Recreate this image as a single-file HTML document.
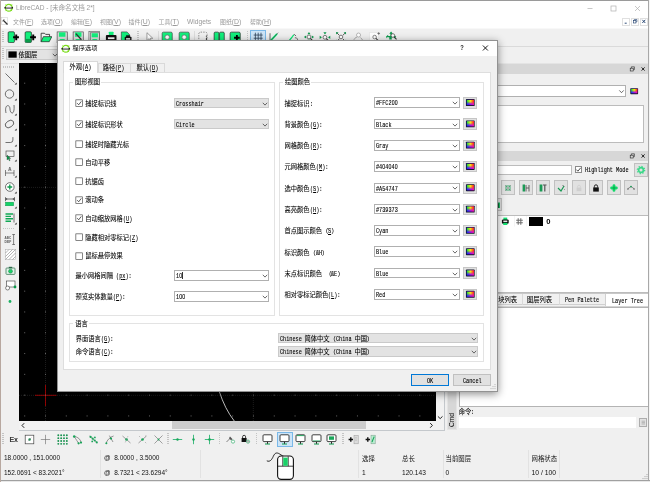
<!DOCTYPE html>
<html><head><meta charset="utf-8"><title>LibreCAD</title><style>
html,body{margin:0;padding:0}
body{width:650px;height:482px;overflow:hidden;position:relative;background:#f0f0f0;font-family:"Liberation Sans","Noto Sans CJK SC",sans-serif;font-size:6px;color:#000}
div,svg{position:absolute;box-sizing:border-box}
.t{white-space:nowrap}
.s{font-family:"Liberation Mono","Noto Sans CJK SC",monospace;-webkit-text-stroke:0.13px #000}
.m{display:inline-block;line-height:0;font-family:"Liberation Mono",monospace;font-size:7px;transform:scaleX(.74);transform-origin:0 50%;-webkit-text-stroke:0.12px #000}
.c{font-family:"Liberation Mono","Noto Sans CJK SC",sans-serif;-webkit-text-stroke:0.07px #000}
.cb{background:#e3e3e3;border:1px solid #cacaca}
.ce{background:#fff;border:1px solid #b0b0b0}
.btn{background:#e1e1e1;border:1px solid #c0c0c0}
.chk{background:#fff;border:1px solid #8a8a8a}
.z{display:inline-block;position:static;width:0.6em;text-align:center;font-family:"Liberation Sans",sans-serif;line-height:0}
.grp{border:1px solid #e3e3e3}
.sep{background:#c8c8c8}
</style></head><body>
<div id="w" style="left:0;top:0;width:650px;height:482px;will-change:transform">
<div style="left:0px;top:0px;width:650px;height:28px;background:#fff"></div>
<div style="left:0px;top:0px;width:650px;height:1px;background:#9a9a9a"></div>
<div style="left:0px;top:28px;width:650px;height:1px;background:#f8f8f8"></div>
<svg style="left:4px;top:3px" width="9.5" height="9.5" viewBox="0 0 20 20"><circle cx="10" cy="10" r="7.2" fill="none" stroke="#7ddc1f" stroke-width="2.6"/><path d="M3 3l3 3M17 3l-3 3M3 17l3-3M17 17l-3-3" stroke="#7ddc1f" stroke-width="1.6"/><rect x="1" y="8.3" width="18" height="3.4" fill="#222"/><rect x="4" y="9.3" width="12" height="1.2" fill="#fff"/></svg>
<div class="t" style="left:16px;top:3.00px;font-size:6.55px;color:#9a9a9a;line-height:10px;">LibreCAD - [未命名文档 2*]</div>
<svg style="left:580px;top:0" width="70" height="17" viewBox="0 0 70 17"><path d="M7.5 8.5h5" stroke="#b0b0b0" stroke-width="0.7"/><rect x="31" y="6" width="5" height="5" fill="none" stroke="#b0b0b0" stroke-width="0.7"/><path d="M55 6l5 5M60 6l-5 5" stroke="#b0b0b0" stroke-width="0.7"/></svg>
<div style="left:622px;top:17.5px;width:7.5px;height:8px;background:#fff;border:0.5px solid #e0e0e0"></div>
<div style="left:631px;top:17.5px;width:7.5px;height:8px;background:#fff;border:0.5px solid #e0e0e0"></div>
<div style="left:640px;top:17.5px;width:7.5px;height:8px;background:#fff;border:0.5px solid #e0e0e0"></div>
<svg style="left:622px;top:17px" width="27" height="9" viewBox="0 0 27 9"><path d="M2.7 6.2h2" stroke="#1a3a6a" stroke-width="0.9"/><rect x="11.3" y="3.6" width="2.6" height="2.4" fill="none" stroke="#1a3a6a" stroke-width="0.6"/><path d="M12.3 3.4v-0.9h2.6v2.4h-0.9" fill="none" stroke="#1a3a6a" stroke-width="0.6"/><path d="M20.3 2.8l3 3.2M23.3 2.8l-3 3.2" stroke="#1a3a6a" stroke-width="0.9"/></svg>
<svg style="left:1px;top:17px" width="9" height="9" viewBox="0 0 9 9"><rect x="0.5" y="0.5" width="6" height="7" fill="#fff" stroke="#ccc" stroke-width="0.5"/><path d="M2 3l3 3 1.5 1.5" stroke="#333" stroke-width="1.2"/><path d="M1.5 4.5l2-2.5" stroke="#666" stroke-width="0.6"/></svg>
<div class="t" style="left:13px;top:17.10px;font-size:5.9px;color:#999;line-height:10px;">文件<span style="font-size:6.9px">(<u>F</u>)</span></div>
<div class="t" style="left:41px;top:17.10px;font-size:5.9px;color:#999;line-height:10px;">选项<span style="font-size:6.9px">(<u>O</u>)</span></div>
<div class="t" style="left:71px;top:17.10px;font-size:5.9px;color:#999;line-height:10px;">编辑<span style="font-size:6.9px">(<u>E</u>)</span></div>
<div class="t" style="left:100px;top:17.10px;font-size:5.9px;color:#999;line-height:10px;">视图<span style="font-size:6.9px">(<u>V</u>)</span></div>
<div class="t" style="left:128.6px;top:17.10px;font-size:5.9px;color:#999;line-height:10px;">插件<span style="font-size:6.9px">(<u>U</u>)</span></div>
<div class="t" style="left:158.5px;top:17.10px;font-size:5.9px;color:#999;line-height:10px;">工具<span style="font-size:6.9px">(<u>T</u>)</span></div>
<div class="t" style="left:187px;top:17.10px;font-size:5.9px;color:#999;line-height:10px;"><span style="font-size:6.7px">Widgets</span></div>
<div class="t" style="left:220px;top:17.10px;font-size:5.9px;color:#999;line-height:10px;">图纸<span style="font-size:6.9px">(<u>D</u>)</span></div>
<div class="t" style="left:250px;top:17.10px;font-size:5.9px;color:#999;line-height:10px;">帮助<span style="font-size:6.9px">(<u>H</u>)</span></div>
<div style="left:0px;top:45.5px;width:650px;height:0.7px;background:#dadada"></div>
<div style="left:0px;top:62.5px;width:650px;height:0.7px;background:#e4e4e4"></div>
<div style="left:2px;top:31px;width:1.5px;height:12px;background-image:repeating-linear-gradient(#c4c4c4 0 1px,transparent 1px 2px)"></div>
<svg style="left:6.8px;top:30.7px" width="12.4" height="12.4" viewBox="0 0 11 11"><rect x="1" y="0.7" width="5.6" height="9.6" rx="1" fill="#12f07c" stroke="#1c1c1c" stroke-width="0.6"/><path d="M5.4 5.6h5.2M8.2 3v5.2" stroke="#000" stroke-width="1.7"/></svg>
<svg style="left:23.8px;top:30.7px" width="12.4" height="12.4" viewBox="0 0 11 11"><rect x="1" y="0.7" width="5.6" height="9.6" rx="1" fill="#12f07c" stroke="#1c1c1c" stroke-width="0.6"/><rect x="1.3" y="7" width="5" height="3" fill="#0a9a4a"/><path d="M5.4 5.6h5.2M8.2 3v5.2" stroke="#000" stroke-width="1.7"/></svg>
<svg style="left:39.5px;top:30.7px" width="12.4" height="12.4" viewBox="0 0 11 11"><path d="M1 9.5V2h3l1 1h3.5v2" fill="none" stroke="#1c1c1c" stroke-width="0.7"/><path d="M1 9.5l2-4.5h7.5l-2.3 4.5z" fill="#12f07c" stroke="#1c1c1c" stroke-width="0.6"/></svg>
<svg style="left:56.3px;top:30.7px" width="12.4" height="12.4" viewBox="0 0 11 11"><rect x="1" y="0.8" width="9" height="9.6" fill="#dcdcdc" stroke="#4a4a4a" stroke-width="0.6"/><rect x="2.6" y="1.2" width="5.8" height="3.9" fill="#12f07c"/><rect x="3" y="7" width="5" height="3.2" rx="1.2" fill="#12f07c"/></svg>
<svg style="left:72.3px;top:30.7px" width="12.4" height="12.4" viewBox="0 0 11 11"><rect x="1" y="0.8" width="9" height="9.6" fill="#dcdcdc" stroke="#4a4a4a" stroke-width="0.6"/><rect x="2.6" y="1.2" width="5.8" height="3.9" fill="#12f07c"/><rect x="3" y="7" width="5" height="3.2" rx="1.2" fill="#12f07c"/><path d="M3.4 2.4l5 5.4" stroke="#333" stroke-width="1.1"/></svg>
<svg style="left:88.3px;top:30.7px" width="12.4" height="12.4" viewBox="0 0 11 11"><rect x="0.8" y="0.6" width="9.4" height="9.8" fill="#e4e4e4" stroke="#4a4a4a" stroke-width="0.5"/><rect x="2" y="1.6" width="8" height="8.6" fill="#dcdcdc" stroke="#4a4a4a" stroke-width="0.5"/><rect x="3.2" y="2" width="5.6" height="3.6" fill="#12f07c"/><rect x="3.6" y="7.2" width="4.8" height="3" rx="1.2" fill="#12f07c"/></svg>
<svg style="left:104.6px;top:30.7px" width="12.4" height="12.4" viewBox="0 0 11 11"><rect x="3.4" y="0.6" width="4.2" height="3.4" rx="0.6" fill="#12f07c"/><rect x="0.8" y="3.6" width="9.4" height="5.2" rx="0.9" fill="#111"/><rect x="2.6" y="5.6" width="5.8" height="1.6" fill="#fff"/><rect x="3" y="8" width="5" height="2.4" rx="0.6" fill="#12f07c"/></svg>
<svg style="left:120.3px;top:30.7px" width="12.4" height="12.4" viewBox="0 0 11 11"><path d="M1.2 0.8h5l2 2v7.6h-7z" fill="#12f07c" stroke="#2a2a2a" stroke-width="0.5"/><rect x="4.2" y="5" width="6" height="4" rx="0.7" fill="#111"/><rect x="5.4" y="3.8" width="3.6" height="1.6" fill="#111"/><rect x="5.4" y="6.4" width="3.6" height="1.2" fill="#fff"/></svg>
<div style="left:137.2px;top:31px;width:1.5px;height:12px;background-image:repeating-linear-gradient(#c4c4c4 0 1px,transparent 1px 2px)"></div>
<svg style="left:142.8px;top:30.7px" width="12.4" height="12.4" viewBox="0 0 11 11"><path d="M3.5 1.5v7l1.8-1.6 1.3 2.8 1-0.5-1.3-2.7h2.4z" fill="#fff" stroke="#777" stroke-width="0.6"/></svg>
<svg style="left:160.8px;top:30.7px" width="12.4" height="12.4" viewBox="0 0 11 11"><rect x="1" y="1" width="9" height="9.4" rx="1.2" fill="#12f07c" stroke="#444" stroke-width="0.6"/><circle cx="5.5" cy="5.5" r="2" fill="#fff" stroke="#666" stroke-width="0.6"/></svg>
<svg style="left:177.5px;top:30.7px" width="12.4" height="12.4" viewBox="0 0 11 11"><rect x="1" y="1" width="9" height="9.4" rx="1.2" fill="#12f07c" stroke="#444" stroke-width="0.6"/><circle cx="5.5" cy="5.5" r="2" fill="#fff" stroke="#666" stroke-width="0.6"/></svg>
<svg style="left:196.8px;top:30.7px" width="12.4" height="12.4" viewBox="0 0 11 11"><rect x="1.6" y="1" width="7.4" height="9.4" rx="1.6" fill="none" stroke="#777" stroke-width="0.7" stroke-dasharray="1.3 1"/><path d="M8.4 6v4" stroke="#444" stroke-width="1"/><circle cx="8.4" cy="4.6" r="0.6" fill="#444"/></svg>
<svg style="left:212.8px;top:30.7px" width="12.4" height="12.4" viewBox="0 0 11 11"><rect x="1" y="1" width="4.2" height="9" rx="1" fill="#12f07c" stroke="#222" stroke-width="0.6"/><rect x="5.8" y="1" width="4.2" height="9" rx="1" fill="#12f07c" stroke="#222" stroke-width="0.6"/></svg>
<svg style="left:228.6px;top:30.7px" width="12.4" height="12.4" viewBox="0 0 11 11"><rect x="1" y="1" width="9" height="9.4" rx="1.2" fill="#12f07c" stroke="#222" stroke-width="0.6"/><path d="M4.5 6h5M7 3.6v4.8" stroke="#000" stroke-width="1.6"/></svg>
<div style="left:246.6px;top:31px;width:1.5px;height:12px;background-image:repeating-linear-gradient(#c4c4c4 0 1px,transparent 1px 2px)"></div>
<div style="left:158px;top:31px;width:1px;height:13px;background:#dcdcdc"></div>
<div style="left:194px;top:31px;width:1px;height:13px;background:#dcdcdc"></div>
<div style="left:250px;top:29.5px;width:16px;height:15.5px;background:#cce4f7;border:0.6px solid #7ab8e8"></div>
<svg style="left:251.6px;top:30.7px" width="12.4" height="12.4" viewBox="0 0 11 11"><path d="M3 1.5v8M5.5 1.5v8M8 1.5v8M1.5 3.6h8M1.5 6.4h8" stroke="#2a3e55" stroke-width="0.7"/></svg>
<svg style="left:267.6px;top:30.7px" width="12.4" height="12.4" viewBox="0 0 11 11"><path d="M1.5 9.5l6.5-7" stroke="#12f07c" stroke-width="1.6"/><path d="M1.5 9.5l7.5-8" stroke="#333" stroke-width="0.5"/><path d="M1.8 2v6" stroke="#444" stroke-width="0.7"/></svg>
<svg style="left:286.8px;top:30.7px" width="12.4" height="12.4" viewBox="0 0 11 11"><path d="M1.5 9l5-6 1.5 1.5" fill="none" stroke="#555" stroke-width="0.8"/><path d="M2 8.5l4-5" stroke="#12f07c" stroke-width="1.1"/><path d="M6 9.3a2 2 0 1 0 1-3.3" fill="none" stroke="#555" stroke-width="0.7"/></svg>
<svg style="left:302.8px;top:30.7px" width="12.4" height="12.4" viewBox="0 0 11 11"><circle cx="5.3" cy="5.3" r="1.7" fill="#fff" stroke="#444" stroke-width="0.6"/><path d="M6.5 6.5l2 2" stroke="#333" stroke-width="0.9"/><path d="M0.8 5.3l2-1.4v2.8zM9.8 5.3l-2-1.4v2.8zM5.3 0.8l-1.4 2h2.8zM5.3 9.8l-1.4-2h2.8z" fill="#0c9a4c"/></svg>
<svg style="left:318.8px;top:30.7px" width="12.4" height="12.4" viewBox="0 0 11 11"><circle cx="5.3" cy="5.6" r="1.7" fill="#fff" stroke="#444" stroke-width="0.6"/><path d="M6.5 6.8l2 2" stroke="#333" stroke-width="0.9"/><path d="M2.6 5.6l-2-1.4v2.8zM8 5.6l2-1.4v2.8zM5.3 3l-1.4-2h2.8z" fill="#0c9a4c"/></svg>
<svg style="left:334.8px;top:30.7px" width="12.4" height="12.4" viewBox="0 0 11 11"><circle cx="5.3" cy="5.3" r="1.6" fill="#fff" stroke="#444" stroke-width="0.6"/><path d="M1.2 1.2l2.6 2.6M9.6 1.2l-2.6 2.6M1.2 9.6l2.6-2.6M9.6 9.6l-2.6-2.6" stroke="#333" stroke-width="0.7"/><path d="M1 1h2.2l-2.2 2.2zM9.8 1v2.2l-2.2-2.2zM1 9.8v-2.2l2.2 2.2zM9.8 9.8h-2.2l2.2-2.2z" fill="#0c9a4c"/></svg>
<svg style="left:351.6px;top:30.7px" width="12.4" height="12.4" viewBox="0 0 11 11"><circle cx="5.8" cy="3.6" r="1.8" fill="#fff" stroke="#999" stroke-width="0.6"/><path d="M1.5 9.5c0-3 2-4 3-4M9.5 9.5c0-2-1-3-2-3.6" fill="none" stroke="#999" stroke-width="0.7"/></svg>
<svg style="left:368.6px;top:30.7px" width="12.4" height="12.4" viewBox="0 0 11 11"><rect x="0.6" y="1.6" width="8" height="8" fill="#fff" stroke="#ddd" stroke-width="0.4"/><circle cx="5" cy="5.4" r="1.6" fill="#fff" stroke="#555" stroke-width="0.6"/><path d="M6.2 6.6l2.2 2.2" stroke="#333" stroke-width="0.9"/><path d="M8.6 1v2.4M7.4 2.2h2.4" stroke="#555" stroke-width="0.6"/></svg>
<svg style="left:384.6px;top:30.7px" width="12.4" height="12.4" viewBox="0 0 11 11"><path d="M0.8 5l2-1.6v1h2v-2h-1l1.6-2 1.6 2h-1v2h2v-1l2 1.6-2 1.6v-1h-2v2h-2.2v-2h-2v1z" fill="#0c9a4c"/><circle cx="7" cy="4" r="1.6" fill="#fff" stroke="#444" stroke-width="0.6"/><path d="M8.2 5.2l2 2.2" stroke="#333" stroke-width="0.9"/></svg>
<div style="left:2px;top:48px;width:1.5px;height:12px;background-image:repeating-linear-gradient(#c4c4c4 0 1px,transparent 1px 2px)"></div>
<div class="cb" style="left:5.5px;top:48.5px;width:54px;height:11.5px;"></div>
<svg style="left:8px;top:51px" width="10" height="8" viewBox="8 51 10 8"><rect x="8.4" y="51.4" width="8.3" height="6.3" fill="#000"/></svg>
<div class="t c" style="left:18.5px;top:51.10px;font-size:6.25px;color:#000;line-height:10px;">依图层</div>
<svg style="left:51px;top:51px" width="8" height="8" viewBox="0 0 8 8"><path d="M1.8 2.8l2.2 2.3 2.2-2.3" fill="none" stroke="#3a3a3a" stroke-width="0.75"/></svg>
<div style="left:3px;top:66px;width:12px;height:1.5px;background-image:repeating-linear-gradient(90deg,#c4c4c4 0 1px,transparent 1px 2px)"></div>
<svg style="left:3.8px;top:71.5px" width="13" height="13" viewBox="0 0 13 13"><path d="M1.5 1.5l9 9" stroke="#3a3a3a" stroke-width="0.7"/><path d="M10.6 12.4h2v-2z" fill="#222"/></svg>
<svg style="left:3.8px;top:87.5px" width="13" height="13" viewBox="0 0 13 13"><circle cx="5.5" cy="6" r="4.2" fill="none" stroke="#3a3a3a" stroke-width="0.7"/><path d="M10.6 12.4h2v-2z" fill="#222"/></svg>
<svg style="left:3.8px;top:102.8px" width="13" height="13" viewBox="0 0 13 13"><path d="M2 10c-2-9 4-9 4-4s5 7 4-4" fill="none" stroke="#3a3a3a" stroke-width="0.7"/><path d="M10.6 12.4h2v-2z" fill="#222"/></svg>
<svg style="left:3.8px;top:118.0px" width="13" height="13" viewBox="0 0 13 13"><ellipse cx="5.5" cy="6" rx="4.6" ry="3.2" transform="rotate(-35 5.5 6)" fill="none" stroke="#3a3a3a" stroke-width="0.7"/><path d="M10.6 12.4h2v-2z" fill="#222"/></svg>
<svg style="left:3.8px;top:133.5px" width="13" height="13" viewBox="0 0 13 13"><path d="M1.5 8.5h5a2.4 2.4 0 0 0 2.4-2.4v-3" fill="none" stroke="#3a3a3a" stroke-width="0.7"/><path d="M10.6 12.4h2v-2z" fill="#222"/></svg>
<svg style="left:3.8px;top:149.0px" width="13" height="13" viewBox="0 0 13 13"><rect x="2" y="2" width="8" height="5.4" fill="none" stroke="#3a3a3a" stroke-width="0.6"/><path d="M3 6l0 5 1.3-1.2 1 2 0.8-0.4-1-2h1.6z" fill="#0c9a4c" stroke="#222" stroke-width="0.3"/><path d="M10.6 12.4h2v-2z" fill="#222"/></svg>
<svg style="left:3.8px;top:165.0px" width="13" height="13" viewBox="0 0 13 13"><path d="M1.5 5v6M10 5v6M1.5 8h8.5" stroke="#3a3a3a" stroke-width="0.6"/><path d="M4.5 6l1.3-4 1.3 4M5 4.8h1.6" fill="none" stroke="#3a3a3a" stroke-width="0.6"/><path d="M10.6 12.4h2v-2z" fill="#222"/></svg>
<svg style="left:3.8px;top:180.5px" width="13" height="13" viewBox="0 0 13 13"><circle cx="5.8" cy="6" r="4.3" fill="#fff" stroke="#3a3a3a" stroke-width="0.7"/><path d="M3.4 6h4.8M5.8 3.6v4.8" stroke="#0c9a4c" stroke-width="1.3"/><path d="M10.6 12.4h2v-2z" fill="#222"/></svg>
<svg style="left:3.8px;top:196.0px" width="13" height="13" viewBox="0 0 13 13"><path d="M1.5 1.2v4M10.5 1.2v4M1.5 3h9" stroke="#3a3a3a" stroke-width="0.7"/><path d="M1.5 3l1.6-0.9v1.8zM10.5 3l-1.6-0.9v1.8z" fill="#3a3a3a"/><rect x="1.5" y="6.2" width="8.2" height="3.6" fill="#14d468" stroke="#0c8a45" stroke-width="0.4"/><path d="M10.6 12.4h2v-2z" fill="#222"/></svg>
<svg style="left:3.8px;top:211.5px" width="13" height="13" viewBox="0 0 13 13"><path d="M1.5 2h7.5M1.5 4.4h5.5M1.5 6.8h7.5M1.5 9.2h5.5" stroke="#10a854" stroke-width="1.4"/><path d="M10 1.5v9" fill="none" stroke="#3a3a3a" stroke-width="0.7"/><path d="M10.6 12.4h2v-2z" fill="#222"/></svg>
<div style="left:3px;top:227.5px;width:12px;height:1.5px;background-image:repeating-linear-gradient(90deg,#c4c4c4 0 1px,transparent 1px 2px)"></div>
<svg style="left:3.8px;top:232.5px" width="13" height="13" viewBox="0 0 13 13"><text x="0.6" y="5.6" font-family="Liberation Sans,sans-serif" font-size="3.6" font-weight="bold" fill="#555" textLength="6.6" lengthAdjust="spacingAndGlyphs">ABC</text><text x="0.6" y="9.6" font-family="Liberation Sans,sans-serif" font-size="3.6" font-weight="bold" fill="#555" textLength="6.6" lengthAdjust="spacingAndGlyphs">DEF</text><path d="M9.6 1.5v10M8.2 1.5h2.8M8.2 11.5h2.8" stroke="#3a3a3a" stroke-width="0.6"/></svg>
<svg style="left:3.8px;top:248.0px" width="13" height="13" viewBox="0 0 13 13"><rect x="1.5" y="1.5" width="10" height="10" fill="#fff" stroke="#aaa" stroke-width="0.5"/><path d="M1.5 5l3.5-3.5M1.5 8.5l7-7M1.5 11.5l10-10M5 11.5l6.5-6.5M8.5 11.5l3-3" stroke="#777" stroke-width="0.55"/></svg>
<svg style="left:3.8px;top:263.5px" width="13" height="13" viewBox="0 0 13 13"><rect x="2" y="4" width="9" height="6.4" rx="0.8" fill="#dff3e7" stroke="#2a6a48" stroke-width="0.7"/><rect x="4.8" y="2.8" width="3.4" height="1.4" fill="#2a6a48"/><circle cx="6.5" cy="7.2" r="2" fill="#19d268" stroke="#2a6a48" stroke-width="0.4"/></svg>
<svg style="left:3.8px;top:279.0px" width="13" height="13" viewBox="0 0 13 13"><rect x="2.5" y="2" width="8.5" height="6" fill="#fff" stroke="#3a3a3a" stroke-width="0.6"/><circle cx="3.6" cy="9" r="2" fill="#fff" stroke="#3a3a3a" stroke-width="0.6"/><circle cx="11" cy="8" r="1.4" fill="#0c9a4c"/></svg>
<svg style="left:3.8px;top:294.5px" width="13" height="13" viewBox="0 0 13 13"><circle cx="6" cy="6.5" r="1.4" fill="#19b060"/></svg>
<div style="left:19px;top:63.4px;width:416.5px;height:357.3px;background:#000"></div>
<svg style="left:19px;top:64px" width="416" height="357" viewBox="19 64 416 357"><path d="M19 395.3H434" stroke="#3c3c3c" stroke-width="0.7" stroke-dasharray="0.7 1.3"/><path d="M45.5 64V421" stroke="#3c3c3c" stroke-width="0.7" stroke-dasharray="0.7 1.3"/><path d="M19 187.4H434" stroke="#3c3c3c" stroke-width="0.7" stroke-dasharray="0.7 1.3"/><path d="M253.3 64V421" stroke="#3c3c3c" stroke-width="0.7" stroke-dasharray="0.7 1.3"/><path d="M35 395.3H56.5M45.5 385V406" stroke="#b00000" stroke-width="0.8"/><path d="M219.3 391.5C223 403 228 413 234.3 421" fill="none" stroke="#e8e8e8" stroke-width="0.8"/></svg>
<div style="left:19px;top:64px;width:416px;height:356.6px;background-image:radial-gradient(circle,#686868 0.4px,transparent 0.7px);background-size:20.8px 20.8px;background-position:16.1px 8.8px"></div>
<div style="left:19px;top:420.7px;width:426px;height:9px;background:#f2f2f2"></div>
<div style="left:19px;top:429.6px;width:426.3px;height:0.8px;background:#c4c8cc"></div>
<div style="left:444.4px;top:63.4px;width:0.9px;height:367px;background:#c4c8cc"></div>
<div style="left:171.5px;top:421.4px;width:194.3px;height:7.8px;background:#cdcdcd"></div>
<svg style="left:19px;top:421px" width="415" height="9" viewBox="0 0 415 9"><path d="M5.2 2.2L3 4.5l2.2 2.3" fill="none" stroke="#222" stroke-width="1"/><path d="M411.2 2.1l2.2 2.3-2.2 2.3" fill="none" stroke="#222" stroke-width="1"/></svg>
<div style="left:435.5px;top:63.4px;width:8.6px;height:357.3px;background:#f2f2f2"></div>
<svg style="left:435px;top:411.5px" width="10" height="10" viewBox="0 0 10 10"><path d="M2.9 4.4l2.3 2.2 2.3-2.2" fill="none" stroke="#222" stroke-width="1"/></svg>
<div style="left:447px;top:63.7px;width:203px;height:10px;background:#d7d7d7"></div>
<svg style="left:627px;top:63.7px" width="22" height="10" viewBox="0 0 22 10"><rect x="3.2" y="4.2" width="3" height="2.8" fill="none" stroke="#222" stroke-width="0.6"/><path d="M4.4 4v-1.2h3v2.8h-1" fill="none" stroke="#222" stroke-width="0.6"/><path d="M14.6 3.4l3 3.2M17.6 3.4l-3 3.2" stroke="#111" stroke-width="0.9"/></svg>
<div class="ce" style="left:450px;top:85px;width:175.6px;height:11.5px;"></div>
<svg style="left:617px;top:86.6px" width="9" height="9" viewBox="0 0 9 9"><path d="M2.3 3.4l2.2 2.3 2.2-2.3" fill="none" stroke="#3a3a3a" stroke-width="0.75"/></svg>
<svg style="left:0;top:0" width="0" height="0"><defs><linearGradient id="ga" x1="0" x2="1" y1="0" y2="0"><stop offset="0" stop-color="#10e030"/><stop offset="0.5" stop-color="#f4f010"/><stop offset="1" stop-color="#ff1818"/></linearGradient><linearGradient id="gb" x1="0" x2="1" y1="0" y2="0"><stop offset="0" stop-color="#1030ff"/><stop offset="0.5" stop-color="#9010f0"/><stop offset="1" stop-color="#ff10b0"/></linearGradient><linearGradient id="gm" x1="0" x2="0" y1="0" y2="1"><stop offset="0.3" stop-color="#fff" stop-opacity="1"/><stop offset="0.85" stop-color="#fff" stop-opacity="0"/></linearGradient><mask id="mk" maskContentUnits="objectBoundingBox"><rect x="0" y="0" width="1" height="1" fill="url(#gm)"/></mask></defs></svg>
<svg style="left:629px;top:87px" width="10" height="9" viewBox="0 0 10 9"><rect x="1.30" y="1.20" width="7.8" height="6" rx="0.6" fill="#15152a"/><rect x="2.10" y="1.90" width="6.30" height="4.40" fill="url(#gb)"/><rect x="2.10" y="1.90" width="6.30" height="4.40" fill="url(#ga)" mask="url(#mk)"/></svg>
<div style="left:450px;top:104.8px;width:194px;height:38px;background:#fff;border:1px solid #bcbcbc"></div>
<div style="left:447px;top:150.8px;width:203px;height:10px;background:#d7d7d7"></div>
<svg style="left:627px;top:150.8px" width="22" height="10" viewBox="0 0 22 10"><rect x="3.2" y="4.2" width="3" height="2.8" fill="none" stroke="#222" stroke-width="0.6"/><path d="M4.4 4v-1.2h3v2.8h-1" fill="none" stroke="#222" stroke-width="0.6"/><path d="M14.6 3.4l3 3.2M17.6 3.4l-3 3.2" stroke="#111" stroke-width="0.9"/></svg>
<div style="left:450px;top:164.5px;width:121.6px;height:10.5px;background:#fff;border:1px solid #bcbcbc"></div>
<div class="chk" style="left:575px;top:166px;width:7px;height:7px;"></div>
<svg style="left:575px;top:166px" width="7" height="7" viewBox="0 0 7 7"><path d="M1.4 3.6l1.5 1.6 2.8-3.4" fill="none" stroke="#222" stroke-width="0.8"/></svg>
<div class="t c" style="left:585px;top:165.90px;font-size:6.25px;color:#000;line-height:10px;"><span class="m" style="margin-right:-15.29px">Highlight&nbsp;Mode</span></div>
<div class="btn" style="left:634px;top:163px;width:14px;height:14px;"></div>
<svg style="left:636px;top:165px" width="10" height="10" viewBox="0 0 10 10"><circle cx="5" cy="5" r="2.4" fill="none" stroke="#3ad888" stroke-width="1.7"/><circle cx="5" cy="5" r="3.7" fill="none" stroke="#3ad888" stroke-width="1.2" stroke-dasharray="1.3 1.6"/></svg>
<div class="btn" style="left:501.2px;top:180.3px;width:14px;height:14.5px;"></div>
<div class="btn" style="left:518.8px;top:180.3px;width:14px;height:14.5px;"></div>
<div class="btn" style="left:536.4px;top:180.3px;width:14px;height:14.5px;"></div>
<div class="btn" style="left:554px;top:180.3px;width:14px;height:14.5px;"></div>
<div class="btn" style="left:571.6px;top:180.3px;width:14px;height:14.5px;"></div>
<div class="btn" style="left:589.2px;top:180.3px;width:14px;height:14.5px;"></div>
<div class="btn" style="left:606.8px;top:180.3px;width:14px;height:14.5px;"></div>
<div class="btn" style="left:624.4px;top:180.3px;width:14px;height:14.5px;"></div>
<svg style="left:503.2px;top:182.5px" width="10" height="10" viewBox="0 0 10 10"><path d="M2 2l6 6M8 2l-6 6" stroke="#888" stroke-width="0.6"/><rect x="3" y="3" width="4" height="4" fill="none" stroke="#1a9a55" stroke-width="0.8"/></svg>
<svg style="left:520.8px;top:182.5px" width="10" height="10" viewBox="0 0 10 10"><rect x="1.6" y="1.5" width="2.4" height="7" fill="#1a9a55"/><path d="M5 2v6.5M8 2v6.5M5 5h3" stroke="#555" stroke-width="0.9"/></svg>
<svg style="left:538.4px;top:182.5px" width="10" height="10" viewBox="0 0 10 10"><rect x="1.6" y="1.5" width="2.8" height="7" fill="#1a9a55"/><path d="M5 2h3.5M6.8 2v6.5" stroke="#555" stroke-width="1.2"/></svg>
<svg style="left:556px;top:182.5px" width="10" height="10" viewBox="0 0 10 10"><path d="M2 5l3 3 3-5" fill="none" stroke="#1a9a55" stroke-width="1.2"/><path d="M6.5 2l1.5 1.5M8 6l0.6 0.6" stroke="#555" stroke-width="0.8"/></svg>
<svg style="left:573.6px;top:182.5px" width="10" height="10" viewBox="0 0 10 10"><rect x="2.6" y="4.6" width="4.8" height="3.6" fill="#cfcfcf"/><path d="M3.6 4.6v-1a1.4 1.4 0 0 1 2.8 0v1" fill="none" stroke="#cfcfcf" stroke-width="0.8"/></svg>
<svg style="left:591.2px;top:182.5px" width="10" height="10" viewBox="0 0 10 10"><rect x="2.2" y="4.4" width="5.6" height="4.2" fill="#111"/><path d="M3.4 4.6v-1.2a1.6 1.6 0 0 1 3.2 0v1.2" fill="none" stroke="#111" stroke-width="0.9"/></svg>
<svg style="left:608.8px;top:182.5px" width="10" height="10" viewBox="0 0 10 10"><path d="M5 2.6v4.8M2.6 5h4.8" stroke="#12d868" stroke-width="2.8" stroke-linecap="round"/><path d="M5 3.6v2.8M3.6 5h2.8" stroke="#0aa850" stroke-width="1.2"/></svg>
<svg style="left:626.4px;top:182.5px" width="10" height="10" viewBox="0 0 10 10"><path d="M1.5 6l3.5-2.5 3.5 2.5" fill="none" stroke="#555" stroke-width="0.6"/><circle cx="5" cy="3.6" r="0.9" fill="#1a9a55"/><circle cx="2" cy="6" r="0.7" fill="#555"/><circle cx="8" cy="6" r="0.7" fill="#555"/></svg>
<div class="btn" style="left:487.6px;top:198px;width:14px;height:13.4px;"></div>
<svg style="left:491.5px;top:200px" width="10" height="10" viewBox="0 0 10 10"><path d="M3 8V3h4v5M5 3v5" stroke="#1a9a55" stroke-width="1"/><path d="M7.4 2.4v5.6" stroke="#1fc46a" stroke-width="1.2"/></svg>
<div style="left:450px;top:215px;width:198.5px;height:78px;background:#fff;border:1px solid #bcbcbc"></div>
<svg style="left:497px;top:216px" width="30" height="11" viewBox="497 216 30 11"><rect x="503.4" y="217.6" width="3.8" height="2.6" fill="#12e070"/><rect x="501.9" y="219.4" width="6.8" height="4.4" rx="1.2" fill="#111"/><rect x="503.3" y="220.6" width="4" height="1.3" fill="#fff"/><rect x="503.2" y="222.8" width="4.2" height="2.3" rx="0.6" fill="#12e070"/><path d="M518.2 218.3v6.4M520.8 218.3v6.4M516.2 220.3h6.6M516.2 222.8h6.6" stroke="#6e6e6e" stroke-width="1.05"/><path d="M514.5 216v10.5M526.7 216v10.5" stroke="#ececec" stroke-width="0.6"/></svg>
<div style="left:528.5px;top:216.7px;width:14.2px;height:9.2px;background:#000"></div>
<div class="t" style="left:546.2px;top:216.80px;font-size:7.6px;color:#000;line-height:10px;font-weight:bold;font-family:"Liberation Serif",serif">0</div>
<div style="left:447px;top:293px;width:203px;height:0.7px;background:#c8c8c8"></div>
<div style="left:447px;top:294.3px;width:158px;height:11px;background:#f0f0f0;border-bottom:0.6px solid #d0d0d0"></div>
<div style="left:521.8px;top:294.3px;width:0.6px;height:10.5px;background:#d9d9d9"></div>
<div style="left:559px;top:294.3px;width:0.6px;height:10.5px;background:#d9d9d9"></div>
<div style="left:605px;top:293.6px;width:45px;height:12.4px;background:#fff;border-left:0.6px solid #d0d0d0"></div>
<div class="t c" style="left:498.3px;top:296.20px;font-size:6.25px;color:#000;line-height:10px;">块列表</div>
<div class="t c" style="left:527px;top:296.20px;font-size:6.25px;color:#000;line-height:10px;">图层列表</div>
<div class="t c" style="left:565px;top:296.20px;font-size:6.25px;color:#000;line-height:10px;"><span class="m" style="margin-right:-12.01px">Pen&nbsp;Palette</span></div>
<div class="t c" style="left:611.5px;top:296.60px;font-size:6.25px;color:#000;line-height:10px;"><span class="m" style="margin-right:-10.92px">Layer&nbsp;Tree</span></div>
<div style="left:447px;top:306.4px;width:203px;height:0.8px;background:#d4d4d4"></div>
<div style="left:459.2px;top:307px;width:189.6px;height:100.2px;background:#fff;border:1px solid #b4b4b4;border-right:none"></div>
<div style="left:447px;top:307px;width:10px;height:123.2px;background:#d7d7d7;border:1px solid #e4e4e4"></div>
<div class="t" style="left:447px;top:410.6px;width:10px;height:19.6px;"><div class="t" style="left:-4.7px;top:4.6px;width:19.6px;height:10px;line-height:10px;font-size:6.6px;text-align:center;transform:rotate(-90deg)">Cmd</div></div>
<div class="t c" style="left:458.8px;top:407.60px;font-size:6.25px;color:#000;line-height:10px;">命令<span class="m" style="margin-right:-1.09px">:</span></div>
<div style="left:459.4px;top:416.7px;width:177px;height:11.5px;background:#fff"></div>
<div style="left:638.5px;top:418px;width:8.5px;height:9px;background:#e1e1e1;border:0.6px solid #adadad"></div>
<svg style="left:638.5px;top:418px" width="8.5" height="9" viewBox="0 0 8.5 9"><path d="M2.6 3.2h3.4M2.6 4.6h3.4M2.6 6h3.4" stroke="#999" stroke-width="0.6"/></svg>
<div style="left:2px;top:433px;width:1.5px;height:12px;background-image:repeating-linear-gradient(#c4c4c4 0 1px,transparent 1px 2px)"></div>
<div class="t" style="left:9.6px;top:434.60px;font-size:6.9px;color:#111;line-height:10px;-webkit-text-stroke:0.2px #111">Ex</div>
<svg style="left:23.9px;top:434px" width="11" height="11" viewBox="0 0 11 11"><rect x="1.2" y="1.2" width="8.6" height="8.6" fill="#fff" stroke="#444" stroke-width="0.7"/><circle cx="5.6" cy="5.5" r="1.2" fill="#1a8a50"/><path d="M4 7.2l3.4-3.6" stroke="#666" stroke-width="0.4"/></svg>
<svg style="left:40.2px;top:434px" width="11" height="11" viewBox="0 0 11 11"><path d="M5.5 0.8v9.4M0.8 5.5h9.4" stroke="#666" stroke-width="0.6"/></svg>
<svg style="left:56.5px;top:434px" width="11" height="11" viewBox="0 0 11 11"><circle cx="1.30" cy="1.30" r="0.95" fill="#17924f"/><circle cx="1.30" cy="4.15" r="0.95" fill="#17924f"/><circle cx="1.30" cy="7.00" r="0.95" fill="#17924f"/><circle cx="1.30" cy="9.85" r="0.95" fill="#17924f"/><circle cx="4.15" cy="1.30" r="0.95" fill="#17924f"/><circle cx="4.15" cy="4.15" r="0.95" fill="#17924f"/><circle cx="4.15" cy="7.00" r="0.95" fill="#17924f"/><circle cx="4.15" cy="9.85" r="0.95" fill="#17924f"/><circle cx="7.00" cy="1.30" r="0.95" fill="#17924f"/><circle cx="7.00" cy="4.15" r="0.95" fill="#17924f"/><circle cx="7.00" cy="7.00" r="0.95" fill="#17924f"/><circle cx="7.00" cy="9.85" r="0.95" fill="#17924f"/><circle cx="9.85" cy="1.30" r="0.95" fill="#17924f"/><circle cx="9.85" cy="4.15" r="0.95" fill="#17924f"/><circle cx="9.85" cy="7.00" r="0.95" fill="#17924f"/><circle cx="9.85" cy="9.85" r="0.95" fill="#17924f"/></svg>
<svg style="left:71.9px;top:434px" width="11" height="11" viewBox="0 0 11 11"><path d="M2 2.4C6 3 8.4 5 9.2 8.8M2 2.4C4 5 5.6 8 6.8 9.4" fill="none" stroke="#555" stroke-width="0.6"/><circle cx="2.2" cy="2.4" r="1.25" fill="#1aa55a"/><circle cx="9" cy="8.6" r="1.1" fill="#1aa55a"/><circle cx="6.6" cy="9.3" r="1.1" fill="#1aa55a"/></svg>
<svg style="left:88.1px;top:434px" width="11" height="11" viewBox="0 0 11 11"><path d="M1.5 2l8 7" stroke="#555" stroke-width="0.6"/><circle cx="2.6" cy="2.9" r="1.1" fill="#1aa55a"/><circle cx="4.7" cy="4.7" r="1.1" fill="#1aa55a"/><circle cx="6.7" cy="6.5" r="1.1" fill="#1aa55a"/><circle cx="8.7" cy="8.3" r="1.1" fill="#1aa55a"/><circle cx="6.9" cy="3.4" r="0.9" fill="#1aa55a"/><circle cx="4.2" cy="7.4" r="0.9" fill="#1aa55a"/></svg>
<svg style="left:104.3px;top:434px" width="11" height="11" viewBox="0 0 11 11"><path d="M2 9.6C3 6 6 3 9.6 2" fill="none" stroke="#555" stroke-width="0.6"/><path d="M5.4 1.6l3.6 6.4" stroke="#555" stroke-width="0.6"/><circle cx="2.4" cy="9.2" r="1" fill="#1aa55a"/><circle cx="7" cy="4.6" r="1.1" fill="#1aa55a"/></svg>
<svg style="left:120.5px;top:434px" width="11" height="11" viewBox="0 0 11 11"><path d="M1.5 2l8 7" stroke="#666" stroke-width="0.6"/><circle cx="5.5" cy="5.5" r="1.3" fill="#1aa55a"/><path d="M7 2l-3 7" stroke="#888" stroke-width="0.5" stroke-dasharray="1 0.8"/></svg>
<svg style="left:136.7px;top:434px" width="11" height="11" viewBox="0 0 11 11"><path d="M1.5 9l8-7" stroke="#666" stroke-width="0.6"/><circle cx="5.5" cy="5.5" r="1.3" fill="#1aa55a"/><path d="M2 2l1.2 1.2M8 8l1.2 1.2M8 2l1 0" stroke="#888" stroke-width="0.5"/></svg>
<svg style="left:152.9px;top:434px" width="11" height="11" viewBox="0 0 11 11"><path d="M1.5 1.5l8 8M9.5 1.5l-8 8" stroke="#666" stroke-width="0.6"/><circle cx="5.5" cy="5.5" r="0.9" fill="#1aa55a"/></svg>
<div style="left:167px;top:433px;width:1.5px;height:12px;background-image:repeating-linear-gradient(#c4c4c4 0 1px,transparent 1px 2px)"></div>
<svg style="left:172.2px;top:434px" width="11" height="11" viewBox="0 0 11 11"><path d="M0.8 5.5h9.4" stroke="#2bb673" stroke-width="0.9"/><circle cx="5.5" cy="5.5" r="1.2" fill="#1aa55a"/></svg>
<svg style="left:187.9px;top:434px" width="11" height="11" viewBox="0 0 11 11"><path d="M5.5 0.8v9.4" stroke="#2bb673" stroke-width="0.9"/><circle cx="5.5" cy="5.5" r="1.2" fill="#1aa55a"/></svg>
<svg style="left:203.7px;top:434px" width="11" height="11" viewBox="0 0 11 11"><path d="M5.5 0.8v9.4M0.8 5.5h9.4" stroke="#2bb673" stroke-width="0.9"/><circle cx="5.5" cy="5.5" r="1.3" fill="#1aa55a"/></svg>
<div style="left:218.8px;top:433px;width:1.5px;height:12px;background-image:repeating-linear-gradient(#c4c4c4 0 1px,transparent 1px 2px)"></div>
<svg style="left:224.5px;top:434px" width="11" height="11" viewBox="0 0 11 11"><path d="M1.5 8l4-4" stroke="#666" stroke-width="0.8"/><path d="M5 2.6l2.6 2.6-1.6 1-2-2z" fill="#555"/><circle cx="8" cy="7.6" r="1.6" fill="#fff" stroke="#1aa55a" stroke-width="0.6"/></svg>
<svg style="left:239.5px;top:434px" width="11" height="11" viewBox="0 0 11 11"><rect x="1.6" y="4" width="5" height="4" fill="#111"/><path d="M2.6 4v-1.2a1.5 1.5 0 0 1 3 0v1.2" fill="none" stroke="#111" stroke-width="0.8"/><circle cx="8" cy="7.6" r="1.6" fill="#fff" stroke="#1aa55a" stroke-width="0.6"/><path d="M6.4 7.6h3.2M8 6v3.2" stroke="#666" stroke-width="0.4"/></svg>
<div style="left:255.8px;top:433px;width:1.5px;height:12px;background-image:repeating-linear-gradient(#c4c4c4 0 1px,transparent 1px 2px)"></div>
<div style="left:277px;top:431.5px;width:16px;height:15.5px;background:#cce4f7;border:0.6px solid #7ab8e8"></div>
<svg style="left:262.0px;top:434px" width="11" height="11" viewBox="0 0 11 11"><rect x="1" y="0.8" width="9" height="6.8" rx="1" fill="#fff" stroke="#2a2a2a" stroke-width="0.9"/><path d="M3 10h5" stroke="#1aa55a" stroke-width="1.1"/><path d="M5.5 7.8v2" stroke="#2a2a2a" stroke-width="1"/></svg>
<svg style="left:279.0px;top:434px" width="11" height="11" viewBox="0 0 11 11"><rect x="1" y="0.8" width="9" height="6.8" rx="1" fill="#fff" stroke="#2a2a2a" stroke-width="0.9"/><path d="M3 10h5" stroke="#1aa55a" stroke-width="1.1"/><path d="M5.5 7.8v2" stroke="#2a2a2a" stroke-width="1"/></svg>
<svg style="left:294.8px;top:434px" width="11" height="11" viewBox="0 0 11 11"><rect x="1" y="0.8" width="9" height="6.8" rx="1" fill="#fff" stroke="#2a2a2a" stroke-width="0.9"/><path d="M3 10h5" stroke="#1aa55a" stroke-width="1.1"/><path d="M5.5 7.8v2" stroke="#2a2a2a" stroke-width="1"/><path d="M1.8 1.6h7.4" stroke="#1aa55a" stroke-width="0.9"/></svg>
<svg style="left:310.5px;top:434px" width="11" height="11" viewBox="0 0 11 11"><rect x="1" y="0.8" width="9" height="6.8" rx="1" fill="#fff" stroke="#2a2a2a" stroke-width="0.9"/><path d="M3 10h5" stroke="#1aa55a" stroke-width="1.1"/><path d="M5.5 7.8v2" stroke="#2a2a2a" stroke-width="1"/><path d="M1.8 6.8h7.4" stroke="#1aa55a" stroke-width="0.7"/></svg>
<svg style="left:325.9px;top:434px" width="11" height="11" viewBox="0 0 11 11"><rect x="1" y="0.8" width="9" height="6.8" rx="1" fill="#fff" stroke="#2a2a2a" stroke-width="0.9"/><path d="M3 10h5" stroke="#1aa55a" stroke-width="1.1"/><path d="M5.5 7.8v2" stroke="#2a2a2a" stroke-width="1"/><rect x="3" y="2.4" width="5" height="3.4" fill="#1aa55a"/></svg>
<div style="left:342px;top:433px;width:1.5px;height:12px;background-image:repeating-linear-gradient(#c4c4c4 0 1px,transparent 1px 2px)"></div>
<svg style="left:348.1px;top:434px" width="11" height="11" viewBox="0 0 11 11"><path d="M0.6 5.5h4.4M2.8 3.3v4.4" stroke="#111" stroke-width="1.4"/><rect x="6" y="1.4" width="4.2" height="8.4" fill="#ddd" stroke="#999" stroke-width="0.5"/><path d="M7 3.4h2M7 5h2M7 6.6h2" stroke="#aaa" stroke-width="0.4"/></svg>
<svg style="left:364.5px;top:434px" width="11" height="11" viewBox="0 0 11 11"><path d="M0.6 5.5h4.4M2.8 3.3v4.4" stroke="#111" stroke-width="1.4"/><rect x="6" y="1.2" width="4.2" height="8.6" fill="#b8ecd0" stroke="#7a9a88" stroke-width="0.5"/><path d="M7 8l2.2-5.4" stroke="#1aa55a" stroke-width="1.1"/></svg>
<div class="t" style="left:4px;top:452.80px;font-size:6.5px;color:#111;line-height:10px;">18.0000 , 151.0000</div>
<div class="t" style="left:4px;top:468.00px;font-size:6.5px;color:#111;line-height:10px;">152.0691 &lt; 83.2021°</div>
<div style="left:100px;top:450px;width:0.7px;height:28px;background:#e2e2e2"></div>
<div class="t" style="left:104px;top:452.80px;font-size:6.5px;color:#111;line-height:10px;">@&nbsp; 8.0000 , 3.5000</div>
<div class="t" style="left:104px;top:468.00px;font-size:6.5px;color:#111;line-height:10px;">@&nbsp; 8.7321 &lt; 23.6294°</div>
<div style="left:200px;top:450px;width:0.7px;height:28px;background:#e2e2e2"></div>
<svg style="left:264px;top:449px" width="32" height="32" viewBox="264 449 32 32"><path d="M266.8 460.8c3 1.5 5-1 6.5-4.5s3.5-4 6-2.5 3.5 2.5 5.5 3" fill="none" stroke="#111" stroke-width="0.9"/><rect x="277.6" y="456" width="15.8" height="23.4" rx="3.6" fill="#fff" stroke="#111" stroke-width="1.1"/><path d="M277.6 466.2h15.8M282.8 456.4v9.8M288.2 456.4v9.8" stroke="#111" stroke-width="0.8"/><rect x="283.3" y="457.6" width="4.4" height="8.2" fill="#19d268"/></svg>
<div style="left:358px;top:450px;width:0.7px;height:28px;background:#e2e2e2"></div>
<div class="t" style="left:362px;top:454.00px;font-size:6.4px;color:#111;line-height:10px;">选择</div>
<div class="t" style="left:362px;top:467.50px;font-size:6.6px;color:#111;line-height:10px;">1</div>
<div class="t" style="left:402px;top:454.00px;font-size:6.4px;color:#111;line-height:10px;">总长</div>
<div class="t" style="left:402px;top:467.50px;font-size:6.6px;color:#111;line-height:10px;">120.143</div>
<div style="left:442.8px;top:450px;width:0.7px;height:28px;background:#e2e2e2"></div>
<div class="t" style="left:445.5px;top:454.00px;font-size:6.4px;color:#111;line-height:10px;">当前图层</div>
<div class="t" style="left:445.5px;top:467.50px;font-size:6.6px;color:#111;line-height:10px;">0</div>
<div style="left:527.5px;top:450px;width:0.7px;height:28px;background:#e2e2e2"></div>
<div class="t" style="left:531.5px;top:454.00px;font-size:6.4px;color:#111;line-height:10px;">网格状态</div>
<div class="t" style="left:531.5px;top:467.50px;font-size:6.8px;color:#111;line-height:10px;">10 / 100</div>
<div style="left:558.6px;top:450px;width:0.7px;height:28px;background:#e2e2e2"></div>
<svg style="left:641px;top:473px" width="7" height="7" viewBox="0 0 7 7"><path d="M6 1.5v0.1M6 3.5v0.1M6 5.5v0.1M4 3.5v0.1M4 5.5v0.1M2 5.5v0.1" stroke="#aaa" stroke-width="1" stroke-linecap="square"/></svg>
<div style="left:648.3px;top:0px;width:0.8px;height:482px;background:#a8a8a8"></div>
<div style="left:649px;top:0px;width:1px;height:482px;background:#f4f4f4"></div>
<div style="left:0px;top:480px;width:650px;height:0.8px;background:#a0a0a0"></div>
<div style="left:0px;top:480.8px;width:650px;height:1.2px;background:#e8e8e8"></div>
<div style="left:0px;top:0px;width:0.8px;height:482px;background:#b8a8a0"></div>
<div style="left:57px;top:40px;width:441px;height:352px;background:#f0f0f0;border:1px solid #929292;box-shadow:0 1.5px 8px rgba(0,0,0,0.45)">
<div style="left:0px;top:0px;width:439px;height:15px;background:#fff"></div>
</div>
<svg style="left:61px;top:43.7px" width="9.5" height="9.5" viewBox="0 0 20 20"><circle cx="10" cy="10" r="7.2" fill="none" stroke="#7ddc1f" stroke-width="2.6"/><path d="M3 3l3 3M17 3l-3 3M3 17l3-3M17 17l-3-3" stroke="#7ddc1f" stroke-width="1.6"/><rect x="1" y="8.3" width="18" height="3.4" fill="#222"/><rect x="4" y="9.3" width="12" height="1.2" fill="#fff"/></svg>
<div class="t" style="left:72.6px;top:43.30px;font-size:6.2px;color:#000;line-height:10px;">程序选项</div>
<svg style="left:455px;top:42px" width="40" height="12" viewBox="0 0 40 12"><path d="M27.9 3.5l5 5M32.9 3.5l-5 5" stroke="#111" stroke-width="0.95"/></svg>
<div class="t" style="left:460.4px;top:43.20px;font-size:6.8px;color:#222;line-height:10px;font-weight:bold;transform:scaleX(0.85)">?</div>
<div style="left:62.5px;top:72px;width:428px;height:298.4px;background:#fff;border:1px solid #dedede"></div>
<div style="left:98px;top:63.4px;width:33.4px;height:9px;background:#f0f0f0;border:0.6px solid #d9d9d9;border-bottom:none"></div>
<div style="left:131.4px;top:63.4px;width:33.6px;height:9px;background:#f0f0f0;border:0.6px solid #d9d9d9;border-left:none;border-bottom:none"></div>
<div style="left:63px;top:61.4px;width:35px;height:11.4px;background:#fff;border:0.6px solid #d9d9d9;border-bottom:none"></div>
<div class="t c" style="left:69.4px;top:63.30px;font-size:6.25px;color:#000;line-height:10px;">外观<span class="m" style="margin-right:-3.28px">(<u>A</u>)</span></div>
<div class="t c" style="left:102.8px;top:63.90px;font-size:6.25px;color:#000;line-height:10px;">路径<span class="m" style="margin-right:-3.28px">(<u>P</u>)</span></div>
<div class="t c" style="left:136.6px;top:63.90px;font-size:6.25px;color:#000;line-height:10px;">默认<span class="m" style="margin-right:-3.28px">(<u>D</u>)</span></div>
<div class="grp" style="left:69px;top:81.6px;width:206.4px;height:234.8px;"></div>
<div class="grp" style="left:278.5px;top:81.6px;width:205px;height:234.8px;"></div>
<div class="grp" style="left:69px;top:323.4px;width:414.5px;height:39px;"></div>
<div style="left:73.1px;top:77.6px;width:28px;height:8px;background:#fff"></div>
<div class="t c" style="left:75.0px;top:77.80px;font-size:6.25px;color:#000;line-height:10px;">图形视图</div>
<div style="left:283.1px;top:77.6px;width:28px;height:8px;background:#fff"></div>
<div class="t c" style="left:285.0px;top:77.80px;font-size:6.25px;color:#000;line-height:10px;">绘图颜色</div>
<div style="left:73.3px;top:319.5px;width:16px;height:8px;background:#fff"></div>
<div class="t c" style="left:75.2px;top:319.70px;font-size:6.25px;color:#000;line-height:10px;">语言</div>
<svg style="left:75px;top:98.80px" width="8.2" height="8.2" viewBox="0 0 8.2 8.2"><rect x="0.85" y="0.85" width="6.5" height="6.5" fill="#fff" stroke="#444" stroke-width="0.65"/><path d="M2.2 4.2l1.5 1.6 2.6-3.4" fill="none" stroke="#222" stroke-width="0.75"/></svg>
<div class="t c" style="left:85.3px;top:99.60px;font-size:6.25px;color:#000;line-height:10px;">捕捉标识线</div>
<svg style="left:75px;top:120.00px" width="8.2" height="8.2" viewBox="0 0 8.2 8.2"><rect x="0.85" y="0.85" width="6.5" height="6.5" fill="#fff" stroke="#444" stroke-width="0.65"/><path d="M2.2 4.2l1.5 1.6 2.6-3.4" fill="none" stroke="#222" stroke-width="0.75"/></svg>
<div class="t c" style="left:85.3px;top:120.80px;font-size:6.25px;color:#000;line-height:10px;">捕捉标识形状</div>
<svg style="left:75px;top:139.80px" width="8.2" height="8.2" viewBox="0 0 8.2 8.2"><rect x="0.85" y="0.85" width="6.5" height="6.5" fill="#fff" stroke="#444" stroke-width="0.65"/></svg>
<div class="t c" style="left:85.3px;top:140.60px;font-size:6.25px;color:#000;line-height:10px;">捕捉时隐藏光标</div>
<svg style="left:75px;top:158.40px" width="8.2" height="8.2" viewBox="0 0 8.2 8.2"><rect x="0.85" y="0.85" width="6.5" height="6.5" fill="#fff" stroke="#444" stroke-width="0.65"/></svg>
<div class="t c" style="left:85.3px;top:159.20px;font-size:6.25px;color:#000;line-height:10px;">自动平移</div>
<svg style="left:75px;top:177.00px" width="8.2" height="8.2" viewBox="0 0 8.2 8.2"><rect x="0.85" y="0.85" width="6.5" height="6.5" fill="#fff" stroke="#444" stroke-width="0.65"/></svg>
<div class="t c" style="left:85.3px;top:177.80px;font-size:6.25px;color:#000;line-height:10px;">抗锯齿</div>
<svg style="left:75px;top:195.60px" width="8.2" height="8.2" viewBox="0 0 8.2 8.2"><rect x="0.85" y="0.85" width="6.5" height="6.5" fill="#fff" stroke="#444" stroke-width="0.65"/><path d="M2.2 4.2l1.5 1.6 2.6-3.4" fill="none" stroke="#222" stroke-width="0.75"/></svg>
<div class="t c" style="left:85.3px;top:196.40px;font-size:6.25px;color:#000;line-height:10px;">滚动条</div>
<svg style="left:75px;top:214.20px" width="8.2" height="8.2" viewBox="0 0 8.2 8.2"><rect x="0.85" y="0.85" width="6.5" height="6.5" fill="#fff" stroke="#444" stroke-width="0.65"/><path d="M2.2 4.2l1.5 1.6 2.6-3.4" fill="none" stroke="#222" stroke-width="0.75"/></svg>
<div class="t c" style="left:85.3px;top:215.00px;font-size:6.25px;color:#000;line-height:10px;">自动缩放网格<span class="m" style="margin-right:-3.28px">(<u>U</u>)</span></div>
<svg style="left:75px;top:232.90px" width="8.2" height="8.2" viewBox="0 0 8.2 8.2"><rect x="0.85" y="0.85" width="6.5" height="6.5" fill="#fff" stroke="#444" stroke-width="0.65"/></svg>
<div class="t c" style="left:85.3px;top:233.70px;font-size:6.25px;color:#000;line-height:10px;">隐藏相对零标记<span class="m" style="margin-right:-3.28px">(<u>Z</u>)</span></div>
<svg style="left:75px;top:251.50px" width="8.2" height="8.2" viewBox="0 0 8.2 8.2"><rect x="0.85" y="0.85" width="6.5" height="6.5" fill="#fff" stroke="#444" stroke-width="0.65"/></svg>
<div class="t c" style="left:85.3px;top:252.30px;font-size:6.25px;color:#000;line-height:10px;">鼠标悬停效果</div>
<div class="cb" style="left:173.8px;top:97.60000000000001px;width:95.4px;height:10.6px;"></div>
<div class="t c" style="left:176.0px;top:99.60px;font-size:6.25px;color:#000;line-height:10px;"><span class="m" style="margin-right:-9.83px">Crosshair</span></div>
<svg style="left:260.90px;top:99.50px" width="8" height="8" viewBox="0 0 8 8"><path d="M1.8 2.8l2.2 2.3 2.2-2.3" fill="none" stroke="#3a3a3a" stroke-width="0.75"/></svg>
<div class="cb" style="left:173.8px;top:118.9px;width:95.4px;height:10.6px;"></div>
<div class="t c" style="left:176.0px;top:120.90px;font-size:6.25px;color:#000;line-height:10px;"><span class="m" style="margin-right:-6.55px">Circle</span></div>
<svg style="left:260.90px;top:120.80px" width="8" height="8" viewBox="0 0 8 8"><path d="M1.8 2.8l2.2 2.3 2.2-2.3" fill="none" stroke="#3a3a3a" stroke-width="0.75"/></svg>
<div class="t c" style="left:75.6px;top:271.80px;font-size:6.25px;color:#000;line-height:10px;">最小网格间隔<span class="m" style="margin-right:-6.55px">&nbsp;(<u>p</u><u>x</u>):</span></div>
<div class="t c" style="left:75.6px;top:292.70px;font-size:6.25px;color:#000;line-height:10px;">预览实体数量<span class="m" style="margin-right:-4.37px">(<u>P</u>):</span></div>
<div class="ce" style="left:173.8px;top:270.3px;width:95.4px;height:10.6px;"></div>
<div class="t c" style="left:176.0px;top:272.30px;font-size:6.25px;color:#000;line-height:10px;"><span class="m" style="margin-right:-2.18px">1<span class="z">0</span></span></div>
<svg style="left:260.90px;top:272.20px" width="8" height="8" viewBox="0 0 8 8"><path d="M1.8 2.8l2.2 2.3 2.2-2.3" fill="none" stroke="#3a3a3a" stroke-width="0.75"/></svg>
<div style="left:182.2px;top:272px;width:0.6px;height:7px;background:#333"></div>
<div class="ce" style="left:173.8px;top:291.09999999999997px;width:95.4px;height:10.6px;"></div>
<div class="t c" style="left:176.0px;top:293.10px;font-size:6.25px;color:#000;line-height:10px;"><span class="m" style="margin-right:-3.28px">1<span class="z">0</span><span class="z">0</span></span></div>
<svg style="left:260.90px;top:293.00px" width="8" height="8" viewBox="0 0 8 8"><path d="M1.8 2.8l2.2 2.3 2.2-2.3" fill="none" stroke="#3a3a3a" stroke-width="0.75"/></svg>
<div class="t c" style="left:284.6px;top:99.50px;font-size:6.25px;color:#000;line-height:10px;">捕捉标识<span class="m" style="margin-right:-1.09px">:</span></div>
<div class="ce" style="left:373.8px;top:97.3px;width:85.8px;height:10.6px;"></div>
<div class="t c" style="left:376.0px;top:99.30px;font-size:6.25px;color:#000;line-height:10px;"><span class="m" style="margin-right:-7.64px">#FFC2<span class="z">0</span><span class="z">0</span></span></div>
<svg style="left:451.30px;top:99.20px" width="8" height="8" viewBox="0 0 8 8"><path d="M1.8 2.8l2.2 2.3 2.2-2.3" fill="none" stroke="#3a3a3a" stroke-width="0.75"/></svg>
<div style="left:463px;top:97.0px;width:14px;height:11.5px;background:#e1e1e1;border:1px solid #c6c6c6;"></div>
<svg style="left:464px;top:98px" width="11" height="9" viewBox="0 0 11 9"><rect x="1.95" y="1.10" width="8.7" height="6.9" rx="0.6" fill="#15152a"/><rect x="2.75" y="1.80" width="7.20" height="5.30" fill="url(#gb)"/><rect x="2.75" y="1.80" width="7.20" height="5.30" fill="url(#ga)" mask="url(#mk)"/></svg>
<div class="t c" style="left:284.6px;top:120.80px;font-size:6.25px;color:#000;line-height:10px;">背景颜色<span class="m" style="margin-right:-4.37px">(<u>G</u>):</span></div>
<div class="ce" style="left:373.8px;top:118.605px;width:85.8px;height:10.6px;"></div>
<div class="t c" style="left:376.0px;top:120.61px;font-size:6.25px;color:#000;line-height:10px;"><span class="m" style="margin-right:-5.46px">Black</span></div>
<svg style="left:451.30px;top:120.50px" width="8" height="8" viewBox="0 0 8 8"><path d="M1.8 2.8l2.2 2.3 2.2-2.3" fill="none" stroke="#3a3a3a" stroke-width="0.75"/></svg>
<div style="left:463px;top:118.305px;width:14px;height:11.5px;background:#e1e1e1;border:1px solid #c6c6c6;"></div>
<svg style="left:464px;top:119px" width="11" height="9" viewBox="0 0 11 9"><rect x="1.95" y="1.41" width="8.7" height="6.9" rx="0.6" fill="#15152a"/><rect x="2.75" y="2.11" width="7.20" height="5.30" fill="url(#gb)"/><rect x="2.75" y="2.11" width="7.20" height="5.30" fill="url(#ga)" mask="url(#mk)"/></svg>
<div class="t c" style="left:284.6px;top:142.11px;font-size:6.25px;color:#000;line-height:10px;">网格颜色<span class="m" style="margin-right:-4.37px">(<u>R</u>):</span></div>
<div class="ce" style="left:373.8px;top:139.90999999999997px;width:85.8px;height:10.6px;"></div>
<div class="t c" style="left:376.0px;top:141.91px;font-size:6.25px;color:#000;line-height:10px;"><span class="m" style="margin-right:-4.37px">Gray</span></div>
<svg style="left:451.30px;top:141.81px" width="8" height="8" viewBox="0 0 8 8"><path d="M1.8 2.8l2.2 2.3 2.2-2.3" fill="none" stroke="#3a3a3a" stroke-width="0.75"/></svg>
<div style="left:463px;top:139.60999999999999px;width:14px;height:11.5px;background:#e1e1e1;border:1px solid #c6c6c6;"></div>
<svg style="left:464px;top:140px" width="11" height="9" viewBox="0 0 11 9"><rect x="1.95" y="1.71" width="8.7" height="6.9" rx="0.6" fill="#15152a"/><rect x="2.75" y="2.41" width="7.20" height="5.30" fill="url(#gb)"/><rect x="2.75" y="2.41" width="7.20" height="5.30" fill="url(#ga)" mask="url(#mk)"/></svg>
<div class="t c" style="left:284.6px;top:163.41px;font-size:6.25px;color:#000;line-height:10px;">元网格颜色<span class="m" style="margin-right:-4.37px">(<u>M</u>):</span></div>
<div class="ce" style="left:373.8px;top:161.21499999999997px;width:85.8px;height:10.6px;"></div>
<div class="t c" style="left:376.0px;top:163.22px;font-size:6.25px;color:#000;line-height:10px;"><span class="m" style="margin-right:-7.64px">#4<span class="z">0</span>4<span class="z">0</span>4<span class="z">0</span></span></div>
<svg style="left:451.30px;top:163.11px" width="8" height="8" viewBox="0 0 8 8"><path d="M1.8 2.8l2.2 2.3 2.2-2.3" fill="none" stroke="#3a3a3a" stroke-width="0.75"/></svg>
<div style="left:463px;top:160.915px;width:14px;height:11.5px;background:#e1e1e1;border:1px solid #c6c6c6;"></div>
<svg style="left:464px;top:162px" width="11" height="9" viewBox="0 0 11 9"><rect x="1.95" y="1.02" width="8.7" height="6.9" rx="0.6" fill="#15152a"/><rect x="2.75" y="1.72" width="7.20" height="5.30" fill="url(#gb)"/><rect x="2.75" y="1.72" width="7.20" height="5.30" fill="url(#ga)" mask="url(#mk)"/></svg>
<div class="t c" style="left:284.6px;top:184.72px;font-size:6.25px;color:#000;line-height:10px;">选中颜色<span class="m" style="margin-right:-4.37px">(<u>S</u>):</span></div>
<div class="ce" style="left:373.8px;top:182.51999999999998px;width:85.8px;height:10.6px;"></div>
<div class="t c" style="left:376.0px;top:184.52px;font-size:6.25px;color:#000;line-height:10px;"><span class="m" style="margin-right:-7.64px">#A54747</span></div>
<svg style="left:451.30px;top:184.42px" width="8" height="8" viewBox="0 0 8 8"><path d="M1.8 2.8l2.2 2.3 2.2-2.3" fill="none" stroke="#3a3a3a" stroke-width="0.75"/></svg>
<div style="left:463px;top:182.22px;width:14px;height:11.5px;background:#e1e1e1;border:1px solid #c6c6c6;"></div>
<svg style="left:464px;top:183px" width="11" height="9" viewBox="0 0 11 9"><rect x="1.95" y="1.32" width="8.7" height="6.9" rx="0.6" fill="#15152a"/><rect x="2.75" y="2.02" width="7.20" height="5.30" fill="url(#gb)"/><rect x="2.75" y="2.02" width="7.20" height="5.30" fill="url(#ga)" mask="url(#mk)"/></svg>
<div class="t c" style="left:284.6px;top:206.03px;font-size:6.25px;color:#000;line-height:10px;">高亮颜色<span class="m" style="margin-right:-4.37px">(<u>H</u>):</span></div>
<div class="ce" style="left:373.8px;top:203.825px;width:85.8px;height:10.6px;"></div>
<div class="t c" style="left:376.0px;top:205.83px;font-size:6.25px;color:#000;line-height:10px;"><span class="m" style="margin-right:-7.64px">#739373</span></div>
<svg style="left:451.30px;top:205.72px" width="8" height="8" viewBox="0 0 8 8"><path d="M1.8 2.8l2.2 2.3 2.2-2.3" fill="none" stroke="#3a3a3a" stroke-width="0.75"/></svg>
<div style="left:463px;top:203.525px;width:14px;height:11.5px;background:#e1e1e1;border:1px solid #c6c6c6;"></div>
<svg style="left:464px;top:204px" width="11" height="9" viewBox="0 0 11 9"><rect x="1.95" y="1.63" width="8.7" height="6.9" rx="0.6" fill="#15152a"/><rect x="2.75" y="2.33" width="7.20" height="5.30" fill="url(#gb)"/><rect x="2.75" y="2.33" width="7.20" height="5.30" fill="url(#ga)" mask="url(#mk)"/></svg>
<div class="t c" style="left:284.6px;top:227.33px;font-size:6.25px;color:#000;line-height:10px;">首点图示颜色（<span class="m" style="margin-right:-1.09px"><u>S</u></span>）</div>
<div class="ce" style="left:373.8px;top:225.13px;width:85.8px;height:10.6px;"></div>
<div class="t c" style="left:376.0px;top:227.13px;font-size:6.25px;color:#000;line-height:10px;"><span class="m" style="margin-right:-4.37px">Cyan</span></div>
<svg style="left:451.30px;top:227.03px" width="8" height="8" viewBox="0 0 8 8"><path d="M1.8 2.8l2.2 2.3 2.2-2.3" fill="none" stroke="#3a3a3a" stroke-width="0.75"/></svg>
<div style="left:463px;top:224.83px;width:14px;height:11.5px;background:#e1e1e1;border:1px solid #c6c6c6;"></div>
<svg style="left:464px;top:225px" width="11" height="9" viewBox="0 0 11 9"><rect x="1.95" y="1.93" width="8.7" height="6.9" rx="0.6" fill="#15152a"/><rect x="2.75" y="2.63" width="7.20" height="5.30" fill="url(#gb)"/><rect x="2.75" y="2.63" width="7.20" height="5.30" fill="url(#ga)" mask="url(#mk)"/></svg>
<div class="t c" style="left:284.6px;top:248.63px;font-size:6.25px;color:#000;line-height:10px;">标识颜色（<span class="m" style="margin-right:-2.18px">&amp;H</span>）</div>
<div class="ce" style="left:373.8px;top:246.43499999999997px;width:85.8px;height:10.6px;"></div>
<div class="t c" style="left:376.0px;top:248.44px;font-size:6.25px;color:#000;line-height:10px;"><span class="m" style="margin-right:-4.37px">Blue</span></div>
<svg style="left:451.30px;top:248.33px" width="8" height="8" viewBox="0 0 8 8"><path d="M1.8 2.8l2.2 2.3 2.2-2.3" fill="none" stroke="#3a3a3a" stroke-width="0.75"/></svg>
<div style="left:463px;top:246.135px;width:14px;height:11.5px;background:#e1e1e1;border:1px solid #c6c6c6;"></div>
<svg style="left:464px;top:247px" width="11" height="9" viewBox="0 0 11 9"><rect x="1.95" y="1.24" width="8.7" height="6.9" rx="0.6" fill="#15152a"/><rect x="2.75" y="1.94" width="7.20" height="5.30" fill="url(#gb)"/><rect x="2.75" y="1.94" width="7.20" height="5.30" fill="url(#ga)" mask="url(#mk)"/></svg>
<div class="t c" style="left:284.6px;top:269.94px;font-size:6.25px;color:#000;line-height:10px;">末点标识颜色<span class="m" style="margin-right:-1.09px">&nbsp;</span>（<span class="m" style="margin-right:-2.18px">&amp;E</span>）</div>
<div class="ce" style="left:373.8px;top:267.73999999999995px;width:85.8px;height:10.6px;"></div>
<div class="t c" style="left:376.0px;top:269.74px;font-size:6.25px;color:#000;line-height:10px;"><span class="m" style="margin-right:-4.37px">Blue</span></div>
<svg style="left:451.30px;top:269.64px" width="8" height="8" viewBox="0 0 8 8"><path d="M1.8 2.8l2.2 2.3 2.2-2.3" fill="none" stroke="#3a3a3a" stroke-width="0.75"/></svg>
<div style="left:463px;top:267.43999999999994px;width:14px;height:11.5px;background:#e1e1e1;border:1px solid #c6c6c6;"></div>
<svg style="left:464px;top:268px" width="11" height="9" viewBox="0 0 11 9"><rect x="1.95" y="1.54" width="8.7" height="6.9" rx="0.6" fill="#15152a"/><rect x="2.75" y="2.24" width="7.20" height="5.30" fill="url(#gb)"/><rect x="2.75" y="2.24" width="7.20" height="5.30" fill="url(#ga)" mask="url(#mk)"/></svg>
<div class="t c" style="left:284.6px;top:291.25px;font-size:6.25px;color:#000;line-height:10px;">相对零标记颜色<span class="m" style="margin-right:-4.37px">(<u>L</u>):</span></div>
<div class="ce" style="left:373.8px;top:289.045px;width:85.8px;height:10.6px;"></div>
<div class="t c" style="left:376.0px;top:291.05px;font-size:6.25px;color:#000;line-height:10px;"><span class="m" style="margin-right:-3.28px">Red</span></div>
<svg style="left:451.30px;top:290.95px" width="8" height="8" viewBox="0 0 8 8"><path d="M1.8 2.8l2.2 2.3 2.2-2.3" fill="none" stroke="#3a3a3a" stroke-width="0.75"/></svg>
<div style="left:463px;top:288.745px;width:14px;height:11.5px;background:#e1e1e1;border:1px solid #c6c6c6;"></div>
<svg style="left:464px;top:289px" width="11" height="9" viewBox="0 0 11 9"><rect x="1.95" y="1.85" width="8.7" height="6.9" rx="0.6" fill="#15152a"/><rect x="2.75" y="2.55" width="7.20" height="5.30" fill="url(#gb)"/><rect x="2.75" y="2.55" width="7.20" height="5.30" fill="url(#ga)" mask="url(#mk)"/></svg>
<div class="t c" style="left:75.7px;top:334.50px;font-size:6.25px;color:#000;line-height:10px;">界面语言<span class="m" style="margin-right:-4.37px">(<u>G</u>):</span></div>
<div class="t c" style="left:75.7px;top:348.10px;font-size:6.25px;color:#000;line-height:10px;">命令语言<span class="m" style="margin-right:-4.37px">(<u>C</u>):</span></div>
<div class="cb" style="left:277.5px;top:332.90000000000003px;width:200.2px;height:10.4px;"></div>
<div class="t c" style="left:279.6px;top:334.70px;font-size:6.25px;color:#000;line-height:10px;"><span class="m" style="margin-right:-8.74px">Chinese&nbsp;</span>简体中文（<span class="m" style="margin-right:-6.55px">China&nbsp;</span>中国）</div>
<svg style="left:469.60px;top:334.70px" width="8" height="8" viewBox="0 0 8 8"><path d="M1.8 2.8l2.2 2.3 2.2-2.3" fill="none" stroke="#3a3a3a" stroke-width="0.75"/></svg>
<div class="cb" style="left:277.5px;top:346.2px;width:200.2px;height:10.4px;"></div>
<div class="t c" style="left:279.6px;top:348.00px;font-size:6.25px;color:#000;line-height:10px;"><span class="m" style="margin-right:-8.74px">Chinese&nbsp;</span>简体中文（<span class="m" style="margin-right:-6.55px">China&nbsp;</span>中国）</div>
<svg style="left:469.60px;top:348.00px" width="8" height="8" viewBox="0 0 8 8"><path d="M1.8 2.8l2.2 2.3 2.2-2.3" fill="none" stroke="#3a3a3a" stroke-width="0.75"/></svg>
<div style="left:411.2px;top:374.4px;width:38.2px;height:11.2px;background:#e1e1e1;border:1px solid #0078d7"></div>
<div class="t c" style="left:427.2px;top:376.60px;font-size:6.25px;color:#000;line-height:10px;"><span class="m" style="margin-right:-2.18px">OK</span></div>
<div class="btn" style="left:452.7px;top:374.4px;width:38.6px;height:11.2px;"></div>
<div class="t c" style="left:462.6px;top:376.60px;font-size:6.25px;color:#000;line-height:10px;"><span class="m" style="margin-right:-6.55px">Cancel</span></div>
<svg style="left:489px;top:383px" width="7" height="7" viewBox="0 0 7 7"><path d="M6 1.5v0.1M6 3.5v0.1M6 5.5v0.1M4 3.5v0.1M4 5.5v0.1M2 5.5v0.1" stroke="#b8b8b8" stroke-width="1" stroke-linecap="square"/></svg>
</div>
</body></html>
